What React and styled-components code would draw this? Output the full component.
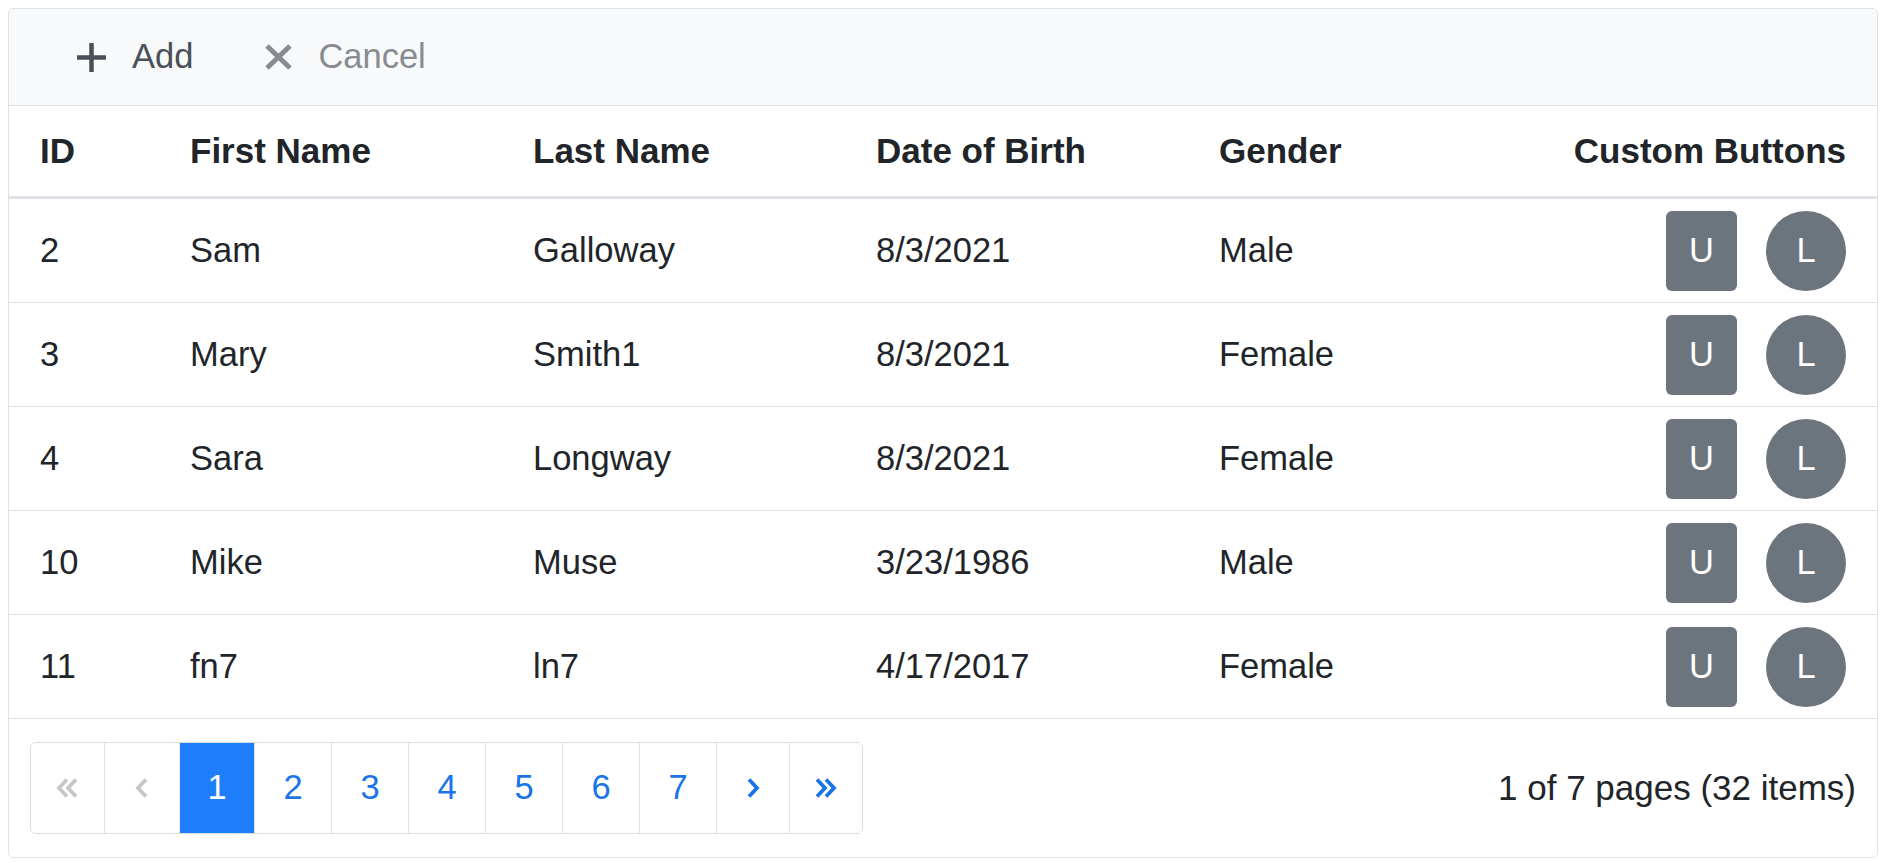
import React from 'react';
import styled, { createGlobalStyle, css } from 'styled-components';

const GlobalStyle = createGlobalStyle`
  *, *::before, *::after {
    box-sizing: border-box;
  }
  body {
    margin: 8px;
    background: #ffffff;
    font-family: "Liberation Sans", Arial, sans-serif;
    color: #212529;
  }
`;

const rows = [
  { id: 2, first: 'Sam', last: 'Galloway', dob: '8/3/2021', gender: 'Male' },
  { id: 3, first: 'Mary', last: 'Smith1', dob: '8/3/2021', gender: 'Female' },
  { id: 4, first: 'Sara', last: 'Longway', dob: '8/3/2021', gender: 'Female' },
  { id: 10, first: 'Mike', last: 'Muse', dob: '3/23/1986', gender: 'Male' },
  { id: 11, first: 'fn7', last: 'ln7', dob: '4/17/2017', gender: 'Female' },
];

const columns = css`
  display: grid;
  grid-template-columns: 150px repeat(4, 343px) 1fr;
  align-items: center;
`;

const Card = styled.div`
  border: 1px solid #dee2e6;
  border-radius: 5px;
  overflow: hidden;
  font-size: 34.5px;
  line-height: 1.15;
`;

const Toolbar = styled.div`
  display: flex;
  align-items: center;
  height: 97px;
  padding: 0 32px;
  background: #f8f9fa;
  border-bottom: 1px solid #dee2e6;
`;

const ToolButton = styled.button`
  display: flex;
  align-items: center;
  gap: 26px;
  height: 100%;
  padding: 0 36px;
  border: none;
  background: transparent;
  font: inherit;
  color: ${(p) => (p.$disabled ? '#878c92' : '#495057')};
  cursor: ${(p) => (p.$disabled ? 'default' : 'pointer')};
  svg {
    flex: none;
  }
`;

const HeaderRow = styled.div`
  ${columns};
  height: 93px;
  border-bottom: 3px solid #dee2e6;
  font-weight: 700;
  font-size: 35px;
`;

const Row = styled.div`
  ${columns};
  height: 104px;
  border-bottom: 1px solid #dee2e6;
`;

const Cell = styled.div`
  padding: 0 31px;
  white-space: nowrap;
  text-align: ${(p) => p.$align || 'left'};
  display: ${(p) => (p.$actions ? 'flex' : 'block')};
  justify-content: flex-end;
  gap: 29px;
`;

const ActionButton = styled.button`
  display: flex;
  align-items: center;
  justify-content: center;
  width: ${(p) => (p.$round ? '80px' : '71px')};
  height: 80px;
  padding: 0;
  border: none;
  border-radius: ${(p) => (p.$round ? '50%' : '6px')};
  background: #6c757d;
  color: #ffffff;
  font: inherit;
  cursor: pointer;
`;

const Footer = styled.div`
  display: flex;
  align-items: center;
  justify-content: space-between;
  height: 138px;
  padding: 0 21px;
`;

const Pager = styled.div`
  display: flex;
  height: 92px;
  border: 1px solid #d9dcdf;
  border-radius: 6px;
  overflow: hidden;
`;

const PageItem = styled.div`
  display: flex;
  align-items: center;
  justify-content: center;
  width: ${(p) => p.$w || 77}px;
  border-left: 1px solid #dee2e6;
  background: ${(p) => (p.$active ? '#1f7efc' : '#ffffff')};
  color: ${(p) => (p.$active ? '#ffffff' : p.$disabled ? '#c4c7ca' : '#1b74e8')};
  cursor: ${(p) => (p.$disabled ? 'default' : 'pointer')};
  &:first-child {
    border-left: none;
  }
`;

const Summary = styled.div`
  color: #212529;
  font-size: 35px;
`;

const PlusIcon = () => (
  <svg width="29" height="29" viewBox="0 0 29 29">
    <path d="M14.5 0v29M0 14.5h29" stroke="currentColor" strokeWidth="4.5" />
  </svg>
);

const CloseIcon = () => (
  <svg width="27" height="26" viewBox="0 0 27 26">
    <path d="M2 2l23 22M25 2L2 24" stroke="currentColor" strokeWidth="5" />
  </svg>
);

const Chevron = ({ dir, double }) => {
  const one = dir === 'left' ? '11,1.5 3,10 11,18.5' : '3,1.5 11,10 3,18.5';
  return (
    <svg width={double ? 24 : 14} height="20" viewBox={double ? '0 0 24 20' : '0 0 14 20'}>
      <polyline points={one} fill="none" stroke="currentColor" strokeWidth="3.8" />
      {double && (
        <polyline
          points={one}
          transform="translate(9 0)"
          fill="none"
          stroke="currentColor"
          strokeWidth="3.8"
        />
      )}
    </svg>
  );
};

export default function App() {
  return (
    <>
      <GlobalStyle />
      <Card>
        <Toolbar>
          <ToolButton>
            <PlusIcon />
            Add
          </ToolButton>
          <ToolButton $disabled>
            <CloseIcon />
            Cancel
          </ToolButton>
        </Toolbar>

        <HeaderRow>
          <Cell>ID</Cell>
          <Cell>First Name</Cell>
          <Cell>Last Name</Cell>
          <Cell>Date of Birth</Cell>
          <Cell>Gender</Cell>
          <Cell $align="right">Custom Buttons</Cell>
        </HeaderRow>

        {rows.map((r) => (
          <Row key={r.id}>
            <Cell>{r.id}</Cell>
            <Cell>{r.first}</Cell>
            <Cell>{r.last}</Cell>
            <Cell>{r.dob}</Cell>
            <Cell>{r.gender}</Cell>
            <Cell $actions>
              <ActionButton>U</ActionButton>
              <ActionButton $round>L</ActionButton>
            </Cell>
          </Row>
        ))}

        <Footer>
          <Pager>
            <PageItem $w={73} $disabled>
              <Chevron dir="left" double />
            </PageItem>
            <PageItem $w={75} $disabled>
              <Chevron dir="left" />
            </PageItem>
            {[1, 2, 3, 4, 5, 6, 7].map((n) => (
              <PageItem key={n} $w={n === 1 ? 75 : 77} $active={n === 1}>
                {n}
              </PageItem>
            ))}
            <PageItem $w={73}>
              <Chevron dir="right" />
            </PageItem>
            <PageItem $w={73}>
              <Chevron dir="right" double />
            </PageItem>
          </Pager>
          <Summary>1 of 7 pages (32 items)</Summary>
        </Footer>
      </Card>
    </>
  );
}
